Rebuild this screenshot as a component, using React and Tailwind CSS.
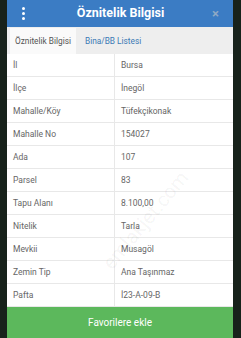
const rows = [
  ["İl", "Bursa"],
  ["İlçe", "İnegöl"],
  ["Mahalle/Köy", "Tüfekçikonak"],
  ["Mahalle No", "154027"],
  ["Ada", "107"],
  ["Parsel", "83"],
  ["Tapu Alanı", "8.100,00"],
  ["Nitelik", "Tarla"],
  ["Mevkii", "Musagöl"],
  ["Zemin Tip", "Ana Taşınmaz"],
  ["Pafta", "İ23-A-09-B"],
];

export default function App() {
  return (
    <div
      className="relative w-[241px] h-[338px] overflow-hidden bg-[#17221b] px-[7px]"
      style={{ fontFamily: "Roboto, 'Liberation Sans', sans-serif" }}
    >
      <div className="flex h-full w-[226px] flex-col bg-white">
        <div className="flex h-[27px] items-center justify-between bg-[#3b7cc4] px-[14px]">
          <div className="flex flex-col gap-[2px] pl-[1px]">
            <span className="h-[3px] w-[3px] rounded-full bg-white" />
            <span className="h-[3px] w-[3px] rounded-full bg-white" />
            <span className="h-[3px] w-[3px] rounded-full bg-white" />
          </div>
          <span className="pl-[4px] text-[12.5px] font-bold text-white">Öznitelik Bilgisi</span>
          <span className="text-[13px] font-bold leading-none text-[#8fa9c4]">×</span>
        </div>

        <div className="flex h-[28px] items-end bg-[#eeeeee] pl-[3px]">
          <div className="flex h-[26px] w-[66px] items-center justify-center bg-[#fafafa] text-[8.3px] text-[#555]">
            Öznitelik Bilgisi
          </div>
          <div className="flex h-[26px] items-center pl-[9px] text-[8.3px] text-[#3b79b5]">
            Bina/BB Listesi
          </div>
        </div>

        <div className="flex-1">
          {rows.map(([k, v]) => (
            <div key={k} className="flex h-[23px] border-b border-[#e8e8e8] text-[8.5px] text-[#666]">
              <div className="flex w-[108px] items-center border-r border-[#e8e8e8] pl-[6px]">{k}</div>
              <div className="flex items-center pl-[6px]">{v}</div>
            </div>
          ))}
        </div>

        <div className="flex h-[31px] items-center justify-center bg-[#5cb85c] text-[10px] text-white">
          Favorilere ekle
        </div>
      </div>

      <div className="pointer-events-none absolute left-[85px] top-[205px] -rotate-[50deg] text-[20px] text-[#000]/[0.05]">
        emlakjet.com
      </div>
    </div>
  );
}
